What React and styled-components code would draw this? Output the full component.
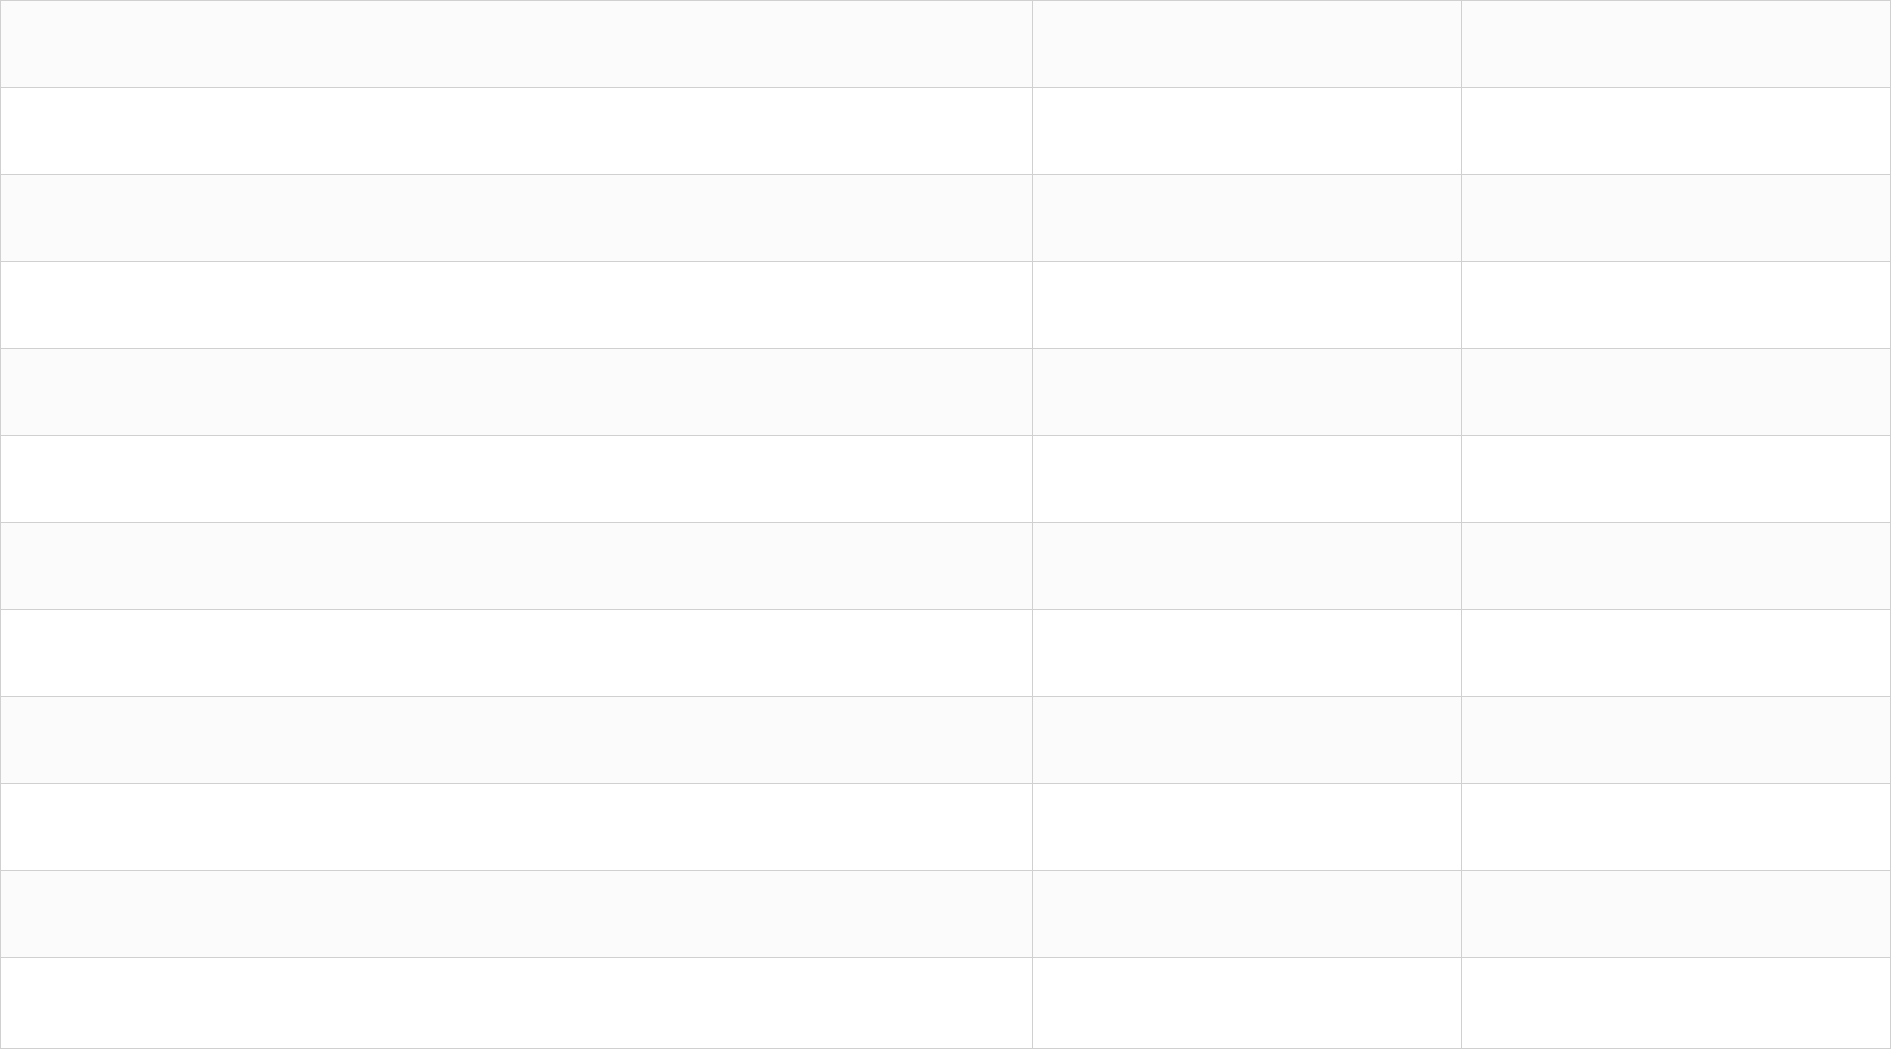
import React from "react";
import styled, { createGlobalStyle } from "styled-components";

const GlobalStyle = createGlobalStyle`
  * {
    box-sizing: border-box;
  }
  html, body {
    margin: 0;
    padding: 0;
    background: #ffffff;
    font-family: "Liberation Sans", Arial, sans-serif;
  }
`;

// Outer frame of the grid: top and left edges, rows stack below
const Table = styled.div`
  width: 100%;
  height: 1049px;
  display: flex;
  flex-direction: column;
  border-top: 1px solid #d0d0d0;
  border-left: 1px solid #d0d0d0;
`;

// Fixed-height rows; the last one soaks up whatever height is left
const Row = styled.div`
  flex: 0 0 87px;
  display: grid;
  grid-template-columns: 1032px 429px 1fr;
  background: ${({ $striped }) => ($striped ? "#fbfbfb" : "#ffffff")};
  border-bottom: 1px solid #d0d0d0;

  &:last-child {
    flex: 1 1 auto;
  }
`;

const Cell = styled.div`
  border-right: 1px solid #d0d0d0;
  padding: 12px 16px;
  font-size: 14px;
  color: #333333;
`;

const ROWS = 12;
const COLS = 3;

const App = () => {
  return (
    <>
      <GlobalStyle />
      <Table>
        {Array.from({ length: ROWS }).map((_, r) => (
          <Row key={r} $striped={r % 2 === 0}>
            {Array.from({ length: COLS }).map((_, c) => (
              <Cell key={c} />
            ))}
          </Row>
        ))}
      </Table>
    </>
  );
};

export default App;
